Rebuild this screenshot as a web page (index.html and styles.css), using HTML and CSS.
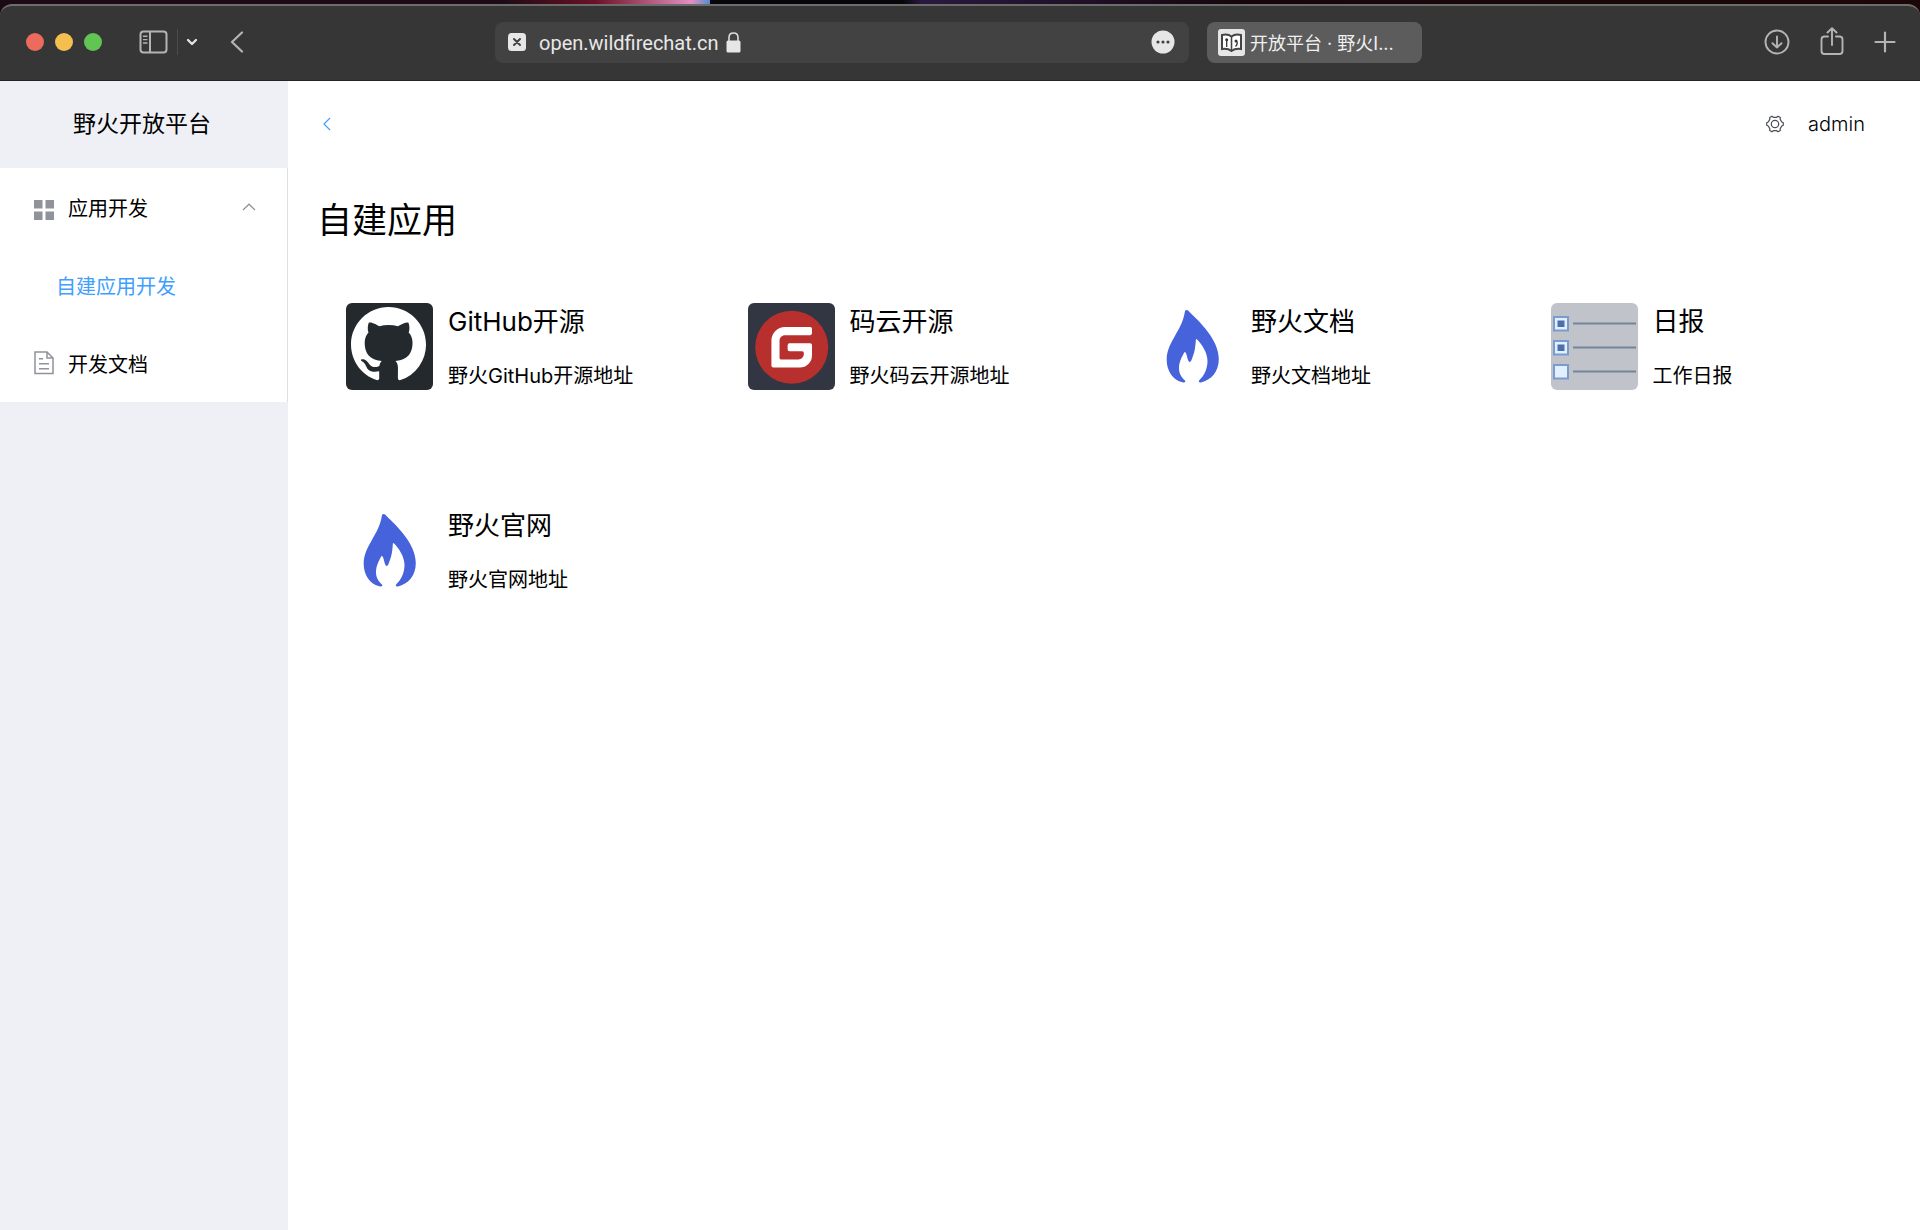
FILE: index.html
```html
<!DOCTYPE html>
<html lang="zh-CN">
<head>
<meta charset="utf-8">
<title>开放平台 · 野火IM</title>
<link rel="stylesheet" href="styles.css">
</head>
<body>
<svg class="defs" aria-hidden="true">
  <symbol id="flame" viewBox="0 0 87 87">
    <path fill="#4663dc" d="M37.5 7C39 7.200 40 8.300 41 9.500C51 19 69.800 37 69.800 56C69.800 69 62 77 52 79.500C50 80 49 78.500 50.500 77C55 73 58.500 66 58.500 58C58.500 50 53 41 47.500 36C46.500 36 47 38 46.500 41C46 48 44 53 42.500 57C41.500 59.500 40 59.500 39 57C38 54 37.500 49 35.500 49C34 52 30 58 30 65C30 71 33 75 36 77.500C37 79 35.500 80 33.500 79.300C24 77 17.700 68 17.700 57C17.700 39 33 28 35.800 9C36 7.800 36.500 7 37.500 7Z"/>
  </symbol>
</svg>

<header class="browser">
  <div class="browser-left">
    <div class="lights"><i class="light red"></i><i class="light yellow"></i><i class="light green"></i></div>
    <button class="tool" aria-label="边栏">
      <svg width="30" height="24" viewBox="0 0 30 24" fill="none" stroke="#b4b4b4" stroke-width="2"><rect x="1.500" y="1.500" width="26" height="21" rx="3"/><path d="M11 1.500v21"/><path stroke-width="1.400" stroke-linecap="round" d="M4.500 6.200h3.500M4.500 9.600h3.500M4.500 13h3.500"/></svg>
    </button>
    <span class="split"></span>
    <button class="tool" aria-label="标签页组">
      <svg width="12" height="8" viewBox="0 0 12 8" fill="none" stroke="#e4e4e4" stroke-width="2.300" stroke-linecap="round" stroke-linejoin="round"><path d="M2 2l4 4 4-4"/></svg>
    </button>
    <button class="tool back" aria-label="后退">
      <svg width="14" height="22" viewBox="0 0 14 22" fill="none" stroke="#b4b4b4" stroke-width="2.200" stroke-linecap="round" stroke-linejoin="round"><path d="M12 1.500L2 11l10 9.500"/></svg>
    </button>
  </div>
  <div class="address">
    <button class="tool" aria-label="停止">
      <svg width="18" height="18" viewBox="0 0 18 18"><rect width="18" height="18" rx="3.500" fill="#e6e6e6"/><path d="M6 6l6 6M12 6l-6 6" stroke="#434242" stroke-width="2" stroke-linecap="round"/></svg>
    </button>
    <input class="url" type="text" aria-label="网址" value="open.wildfirechat.cn">
    <svg width="15" height="21" viewBox="0 0 15 21"><rect x="0.500" y="8.500" width="14" height="12" rx="1.500" fill="#e6e6e6"/><path d="M3 9V5.500C3 2.800 4.900 1 7.500 1S12 2.800 12 5.500V9" fill="none" stroke="#dcdcdc" stroke-width="1.600"/></svg>
    <button class="tool more" aria-label="更多">
      <svg width="24" height="24" viewBox="0 0 24 24"><circle cx="12" cy="12" r="11.500" fill="#e6e6e6"/><g fill="#434242"><circle cx="7" cy="12" r="1.600"/><circle cx="12" cy="12" r="1.600"/><circle cx="17" cy="12" r="1.600"/></g></svg>
    </button>
  </div>
  <button class="tab">
    <svg width="27" height="27" viewBox="0 0 27 27"><rect width="27" height="27" rx="3" fill="#e6e6e6"/><path d="M4 6C8 5 11 5.500 13.500 7.500C16 5.500 19 5 23 6V20C19 19.500 16 20 13.500 22C11 20 8 19.500 4 20Z" fill="#fff" stroke="#444" stroke-width="2"/><path d="M13.500 7.500v14" stroke="#444" stroke-width="1.600"/><path d="M8.700 11v7M17.500 17.500c2-2 2-4 1-5.500" fill="none" stroke="#333" stroke-width="1.300"/><circle cx="8.700" cy="10.700" r="1.500" fill="#333"/><circle cx="18" cy="12" r="1.500" fill="#333"/></svg>
    <span class="tab-title">开放平台 · 野火I...</span>
  </button>
  <div class="browser-right">
    <button class="tool" aria-label="下载">
      <svg width="26" height="26" viewBox="0 0 26 26" fill="none" stroke="#b4b4b4" stroke-width="1.900" stroke-linecap="round" stroke-linejoin="round"><circle cx="13" cy="13" r="11.500"/><path d="M13 7.500v11M8.500 14.200L13 18.500l4.500-4.300"/></svg>
    </button>
    <button class="tool" aria-label="共享">
      <svg width="24" height="30" viewBox="0 0 24 30" fill="none" stroke="#b4b4b4" stroke-width="1.900" stroke-linecap="round" stroke-linejoin="round"><path d="M8 9.500H4.500a3 3 0 0 0-3 3V24a3 3 0 0 0 3 3h15a3 3 0 0 0 3-3V12.500a3 3 0 0 0-3-3H16"/><path d="M12 18V1.500M7.500 5.500L12 1.200l4.500 4.300"/></svg>
    </button>
    <button class="tool" aria-label="新建标签页">
      <svg width="22" height="22" viewBox="0 0 22 22" stroke="#b4b4b4" stroke-width="2.200" stroke-linecap="round"><path d="M11 1.500v19M1.500 11h19"/></svg>
    </button>
  </div>
</header>

<div class="app">
  <aside class="sidebar">
    <div class="brand">野火开放平台</div>
    <nav class="menu">
      <button class="menu-item" aria-expanded="true">
        <svg width="20" height="26" viewBox="0 0 20 26" fill="#909399"><path d="M0 6h8.500v8.500H0zM11.500 6H20v8.500h-8.500zM0 17.500h8.500V26H0zM11.500 17.500H20V26h-8.500z"/></svg>
        <span>应用开发</span>
        <svg class="arrow" width="14" height="8" viewBox="0 0 14 8" fill="none" stroke="#909399" stroke-width="1.200"><path d="M1 7l6-5.800L13 7"/></svg>
      </button>
      <a class="menu-item sub" href="#apps">自建应用开发</a>
      <a class="menu-item" href="#docs">
        <svg width="20" height="24" viewBox="0 0 20 24" fill="none" stroke="#909399" stroke-width="1.500"><path d="M1 1h12l6 6v15.500H1zM13 1v6h6M5 7.800h4M5 12.800h10M5 17.800h10"/></svg>
        <span>开发文档</span>
      </a>
    </nav>
  </aside>

  <main class="main">
    <div class="topbar">
      <a class="return" href="#back" aria-label="返回">
        <svg width="8" height="14" viewBox="0 0 8 14" fill="none" stroke="#409eff" stroke-width="1.200"><path d="M7 1L1 7l6 6"/></svg>
      </a>
      <button class="user">
        <svg width="18" height="18" viewBox="0 0 18 18" fill="none" stroke="#4a4e57" stroke-width="1.200" stroke-linejoin="round"><path d="M6 1.200L7.300 2.300H10.700L12 1.200L14.300 2.500L14.200 4.400L15.800 7L17.300 7.800V10.200L15.800 11L14.200 13.600L14.300 15.500L12 16.800L10.700 15.700H7.300L6 16.800L3.700 15.500L3.800 13.600L2.200 11L.7 10.200V7.800L2.200 7L3.800 4.400L3.700 2.500Z"/><circle cx="9" cy="9" r="3.700"/></svg>
        <span>admin</span>
      </button>
    </div>
    <h1 class="title">自建应用</h1>
    <div class="cards">
      <a class="card" href="#github">
        <svg class="logo" viewBox="0 0 87 87"><rect width="87" height="87" fill="#24292e"/><path fill="#fff" transform="translate(5 4) scale(4.690)" d="M8 0C3.580 0 0 3.580 0 8c0 3.540 2.290 6.530 5.470 7.590.4.070.55-.17.55-.38 0-.19-.01-.82-.01-1.490-2.010.37-2.530-.49-2.690-.94-.09-.23-.48-.94-.82-1.130-.28-.15-.68-.52-.01-.53.63-.01 1.080.58 1.230.82.72 1.210 1.870.87 2.330.66.07-.52.28-.87.51-1.070-1.780-.2-3.640-.89-3.640-3.950 0-.87.31-1.590.82-2.150-.08-.2-.36-1.020.08-2.120 0 0 .67-.21 2.200.82.64-.18 1.320-.27 2-.27s1.360.09 2 .27c1.530-1.040 2.200-.82 2.200-.82.44 1.100.16 1.920.08 2.120.51.56.82 1.270.82 2.150 0 3.070-1.870 3.750-3.650 3.950.29.25.54.73.54 1.480 0 1.070-.01 1.930-.01 2.200 0 .21.15.46.55.38A8.010 8.010 0 0016 8c0-4.420-3.580-8-8-8z"/></svg>
        <div class="info"><h2>GitHub开源</h2><p>野火GitHub开源地址</p></div>
      </a>
      <a class="card" href="#gitee">
        <svg class="logo" viewBox="0 0 87 87"><rect width="87" height="87" fill="#323642"/><circle cx="43.700" cy="44.300" r="36.500" fill="#b7302d"/><path fill="#fff" transform="translate(7.200 7.800) scale(3.042)" d="M18.074 5.333c.328 0 .593.266.592.593v1.482a.594.594 0 0 1-.593.592H9.777c-.982 0-1.778.796-1.778 1.778v5.630c0 .327.266.592.593.592h5.630c.982 0 1.778-.796 1.778-1.778v-.296a.593.593 0 0 0-.592-.593h-4.150a.592.592 0 0 1-.592-.592v-1.482a.593.593 0 0 1 .593-.592h6.815c.327 0 .593.265.593.592v3.408a4 4 0 0 1-4 4H5.926a.593.593 0 0 1-.593-.593V9.778a4.444 4.444 0 0 1 4.445-4.444h8.296z"/></svg>
        <div class="info"><h2>码云开源</h2><p>野火码云开源地址</p></div>
      </a>
      <a class="card" href="#wiki">
        <svg class="logo" viewBox="0 0 87 87"><use href="#flame"/></svg>
        <div class="info"><h2>野火文档</h2><p>野火文档地址</p></div>
      </a>
      <a class="card" href="#daily">
        <svg class="logo" viewBox="0 0 87 87"><rect width="87" height="87" fill="#c1c3cb"/><g fill="#e0f0ff" stroke="#7b9bcd" stroke-width="2"><rect x="3" y="14" width="14" height="13.500"/><rect x="3" y="38" width="14" height="13.500"/><rect x="3" y="62" width="14" height="13.500"/></g><path fill="#4d6fae" d="M6.500 17.500h7v6.500h-7zM6.500 41.500h7v6.500h-7z"/><path stroke="#718698" stroke-width="2" d="M22 20.500h63M22 44.500h63M22 68.500h63"/></svg>
        <div class="info"><h2>日报</h2><p>工作日报</p></div>
      </a>
      <a class="card" href="#site">
        <svg class="logo" viewBox="0 0 87 87"><use href="#flame"/></svg>
        <div class="info"><h2>野火官网</h2><p>野火官网地址</p></div>
      </a>
    </div>
  </main>
</div>
</body>
</html>
```
FILE: styles.css
```css
* {
  box-sizing: border-box;
}

body {
  margin: 0;
  min-height: 100vh;
  display: flex;
  flex-direction: column;
  font-family: "Inter", "Noto Sans CJK SC", sans-serif;
  font-size: 20px;
  font-weight: 400;
  color: #000;
  background: linear-gradient(90deg, #1c0a16 0, #1c0a16 26%, #6b1026 31%, #e58fc0 36%, #4d8fd0 37%, #08060a 37%, #08060a 47%, #2a1840 48%, #16060c 65%, #1c0708 100%);
}

h1,
h2,
p {
  margin: 0;
  font-weight: inherit;
}

a {
  color: inherit;
  text-decoration: none;
}

button,
input {
  margin: 0;
  padding: 0;
  border: 0;
  background: none;
  font: inherit;
  color: inherit;
}

svg {
  display: block;
  flex: none;
}

.defs {
  position: absolute;
  width: 0;
  height: 0;
}

/* Browser toolbar */
.browser {
  display: flex;
  align-items: center;
  height: 77px;
  margin-top: 4px;
  padding-bottom: 2px;
  border-top: 2px solid #6c6e6c;
  border-bottom: 1px solid #242323;
  border-radius: 12px 12px 0 0;
  background: #373636;
}

.browser-left {
  display: flex;
  align-items: center;
  width: 495px;
  padding-left: 26px;
}

.lights {
  display: flex;
  gap: 11px;
  margin-right: 37px;
}

.light {
  width: 18px;
  height: 18px;
  border-radius: 50%;
}

.red {
  background: #ed6a5e;
}

.yellow {
  background: #f5bf4f;
}

.green {
  background: #61c554;
}

.split {
  width: 1px;
  height: 26px;
  margin: 0 8px;
  background: #4d4c4c;
}

.back {
  margin-left: 32px;
}

.address {
  display: flex;
  flex: 1;
  align-items: center;
  height: 41px;
  padding: 0 14px 0 13px;
  border-radius: 8px;
  background: #434242;
}

.url {
  width: 200px;
  padding: 2px 0 0 13px;
  font-family: "Roboto", sans-serif;
  color: #e8e8e8;
}

.more {
  margin-left: auto;
}

.tab {
  display: flex;
  align-items: center;
  gap: 5px;
  width: 215px;
  height: 41px;
  margin-left: 18px;
  padding: 0 11px;
  border-radius: 8px;
  background: #5d5c5c;
  color: #f0f0f0;
  font-size: 18px;
}

.tab-title {
  white-space: nowrap;
}

.browser-right {
  display: flex;
  align-items: center;
  justify-content: flex-end;
  gap: 30px;
  width: 498px;
  padding-right: 24px;
}

/* Application */
.app {
  display: flex;
  flex: 1;
  background: #fff;
}

.sidebar {
  width: 288px;
  background: #eff0f6;
}

.brand {
  height: 87px;
  padding-right: 4px;
  font-size: 23px;
  line-height: 86px;
  text-align: center;
}

.menu {
  border-right: 1px solid #dcdfe6;
  background: #fff;
}

.menu-item {
  display: flex;
  align-items: center;
  gap: 14px;
  width: 100%;
  height: 78px;
  padding: 0 31px 0 34px;
}

.menu-item.sub {
  padding-left: 56px;
  color: #409eff;
}

.arrow {
  margin-left: auto;
}

.main {
  flex: 1;
}

.topbar {
  display: flex;
  align-items: center;
  justify-content: space-between;
  height: 85px;
  padding: 0 55px 0 35px;
}

.user {
  display: flex;
  align-items: center;
  gap: 24px;
  font-weight: 300;
}

.title {
  padding: 24px 29px 0;
  font-size: 35px;
  line-height: 60px;
}

.cards {
  display: grid;
  grid-template-columns: repeat(4, 1fr);
  padding: 53px 13px;
}

.card {
  display: flex;
  gap: 15px;
  height: 204px;
  padding-left: 45px;
}

.logo {
  width: 87px;
  height: 87px;
  border-radius: 6px;
}

.info {
  display: flex;
  flex-direction: column;
  justify-content: space-between;
  height: 87px;
}

.info h2 {
  font-size: 26px;
  line-height: 38px;
}

.info p {
  line-height: 28px;
}
```
